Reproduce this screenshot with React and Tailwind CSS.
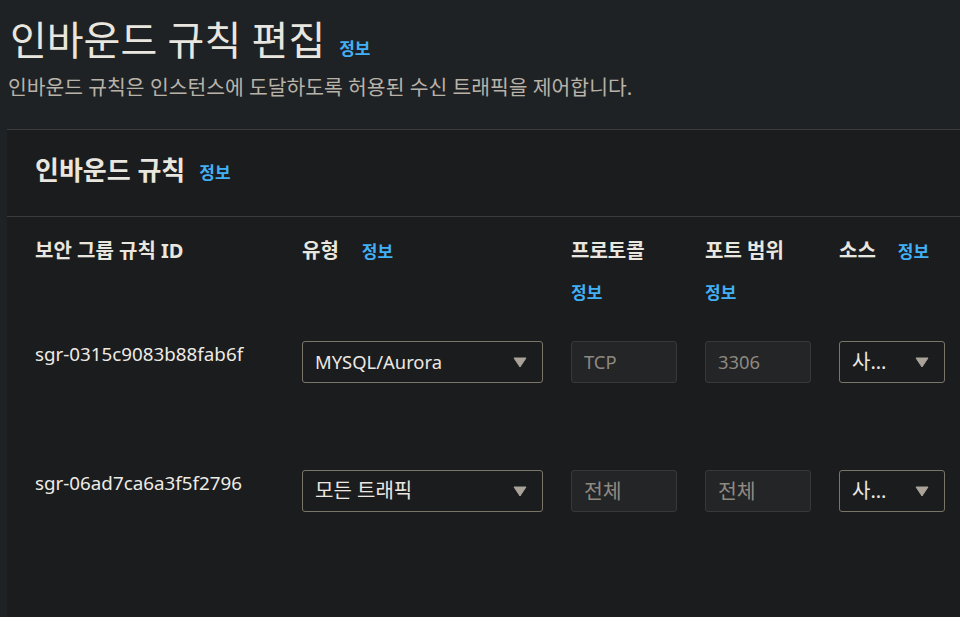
const font = { fontFamily: '"Noto Sans", "Noto Sans CJK KR", sans-serif' };

function Info({ className = "" }) {
  return (
    <span className={`text-[17px] leading-[20px] font-semibold text-[#42b0f5] ${className}`}>
      정보
    </span>
  );
}

function Caret() {
  return (
    <svg width="14" height="11" viewBox="0 0 14 11">
      <path d="M1 1 H13 L7 10 Z" fill="#a9a39a" stroke="#a9a39a" strokeLinejoin="round" />
    </svg>
  );
}

function Select({ value, width, size }) {
  return (
    <div
      className={`${width} h-[42px] flex items-center justify-between pl-3 pr-[15px] border border-[#7b7569] rounded-[3px] bg-[#1b1c1e] ${size} text-[#ece8e1]`}
    >
      <span>{value}</span>
      <Caret />
    </div>
  );
}

function Field({ value, size }) {
  return (
    <div
      className={`w-[106px] h-[42px] flex items-center pl-3 border border-[#36393b] rounded-[3px] bg-[#232527] ${size} text-[#8e8980]`}
    >
      {value}
    </div>
  );
}

const rules = [
  {
    id: "sgr-0315c9083b88fab6f",
    type: "MYSQL/Aurora",
    typeSize: "text-[18.4px]",
    proto: "TCP",
    port: "3306",
    fieldSize: "text-[18.4px]",
  },
  {
    id: "sgr-06ad7ca6a3f5f2796",
    type: "모든 트래픽",
    typeSize: "text-[20px]",
    proto: "전체",
    port: "전체",
    fieldSize: "text-[20.5px]",
  },
];

export default function App() {
  return (
    <div style={font} className="w-[960px] h-[617px] overflow-hidden bg-[#1f2224] text-[#e9e6df]">
      <div className="pl-[10px] pt-[14px]">
        <div className="flex items-baseline gap-[14px]">
          <h1 className="text-[40px] leading-[52px] font-normal">인바운드 규칙 편집</h1>
          <Info />
        </div>
        <p className="-ml-[2px] mt-[7px] text-[20.4px] leading-[28px] text-[#b8b2a9]">
          인바운드 규칙은 인스턴스에 도달하도록 허용된 수신 트래픽을 제어합니다.
        </p>
      </div>

      <div className="ml-[7px] mt-[28px] w-[990px] h-[520px] bg-[#1b1c1e] border-t border-[#3a3c3e]">
        <div className="h-[87px] flex items-center gap-[14px] pl-[28px] pb-[6px] border-b border-[#3a3c3e]">
          <h2 className="text-[26px] font-bold">인바운드 규칙</h2>
          <Info className="mt-[6px]" />
        </div>

        <div className="pl-[28px] pt-[22px]">
          <div className="grid grid-cols-[239px_241px_106px_106px_106px] gap-x-[28px] h-[102px] text-[20px] font-bold leading-[24px]">
            <div>보안 그룹 규칙 ID</div>
            <div className="flex items-baseline gap-[23px]">
              <span>유형</span>
              <Info />
            </div>
            <div className="flex flex-col gap-[20px]">
              <span>프로토콜</span>
              <Info />
            </div>
            <div className="flex flex-col gap-[20px]">
              <span>포트 범위</span>
              <Info />
            </div>
            <div className="flex items-baseline gap-[22px]">
              <span>소스</span>
              <Info />
            </div>
          </div>

          <div className="flex flex-col gap-[87px]">
            {rules.map((r) => (
              <div
                key={r.id}
                className="grid grid-cols-[239px_241px_106px_106px_106px] gap-x-[28px] items-start"
              >
                <div className="text-[18.8px] leading-[24px] pt-[1px] text-[#eeebe5]">{r.id}</div>
                <Select value={r.type} width="w-[241px]" size={r.typeSize} />
                <Field value={r.proto} size={r.fieldSize} />
                <Field value={r.port} size={r.fieldSize} />
                <Select value="사..." width="w-[106px]" size="text-[20px]" />
              </div>
            ))}
          </div>
        </div>
      </div>
    </div>
  );
}
